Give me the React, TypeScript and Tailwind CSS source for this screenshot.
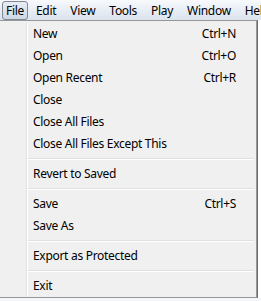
const MENU_BAR = ["File", "Edit", "View", "Tools", "Play", "Window", "Help"];

type Entry = { label: string; shortcut?: string } | "sep";

const ITEMS: Entry[] = [
  { label: "New", shortcut: "Ctrl+N" },
  { label: "Open", shortcut: "Ctrl+O" },
  { label: "Open Recent", shortcut: "Ctrl+R" },
  { label: "Close" },
  { label: "Close All Files" },
  { label: "Close All Files Except This" },
  "sep",
  { label: "Revert to Saved" },
  "sep",
  { label: "Save", shortcut: "Ctrl+S" },
  { label: "Save As" },
  "sep",
  { label: "Export as Protected" },
  "sep",
  { label: "Exit" },
];

export default function App() {
  return (
    <div
      className="relative w-[261px] h-[301px] overflow-hidden bg-[#f4f6f9] text-[12px] tracking-[-0.3px] text-black"
      style={{ fontFamily: '"Noto Sans", "Open Sans", sans-serif' }}
    >
      {/* menu bar */}
      <div className="flex h-[20px] items-stretch whitespace-nowrap bg-gradient-to-b from-[#f7f9fc] to-[#dbe3ee] pl-[2px] pt-[1px]">
        {MENU_BAR.map((m, i) => (
          <div
            key={m}
            className={
              i === 0
                ? "mr-[1px] flex items-center rounded-[3px] border border-[#7f8894] bg-gradient-to-b from-[#e9eef5] to-[#cdd7e4] px-[3px] leading-none"
                : "flex items-center px-[7px] leading-none"
            }
          >
            {m}
          </div>
        ))}
      </div>

      {/* dropdown */}
      <div className="flex">
        <div className="w-[257px] border-t border-r border-b border-[#979797] bg-[#f0f0f0] pt-[2px]">
          <div className="flex">
            <div className="w-[27px] shrink-0 border-r border-[#e2e3e3]" />
            <div className="flex-1 border-l border-white pr-[1px]">
              {ITEMS.map((it, i) =>
                it === "sep" ? (
                  <div key={i} className="flex h-[8px] flex-col justify-center pr-[1px]">
                    <div className="h-[1px] bg-[#e0e0e0]" />
                    <div className="h-[1px] bg-white" />
                  </div>
                ) : (
                  <div key={i} className="flex h-[22px] items-center justify-between pl-[5px] pr-[19px]">
                    <span>{it.label}</span>
                    {it.shortcut && <span>{it.shortcut}</span>}
                  </div>
                ),
              )}
            </div>
          </div>
        </div>
        {/* window behind the menu */}
        <div className="flex-1 border-l border-[#6f6f6f] bg-white" />
      </div>
    </div>
  );
}
